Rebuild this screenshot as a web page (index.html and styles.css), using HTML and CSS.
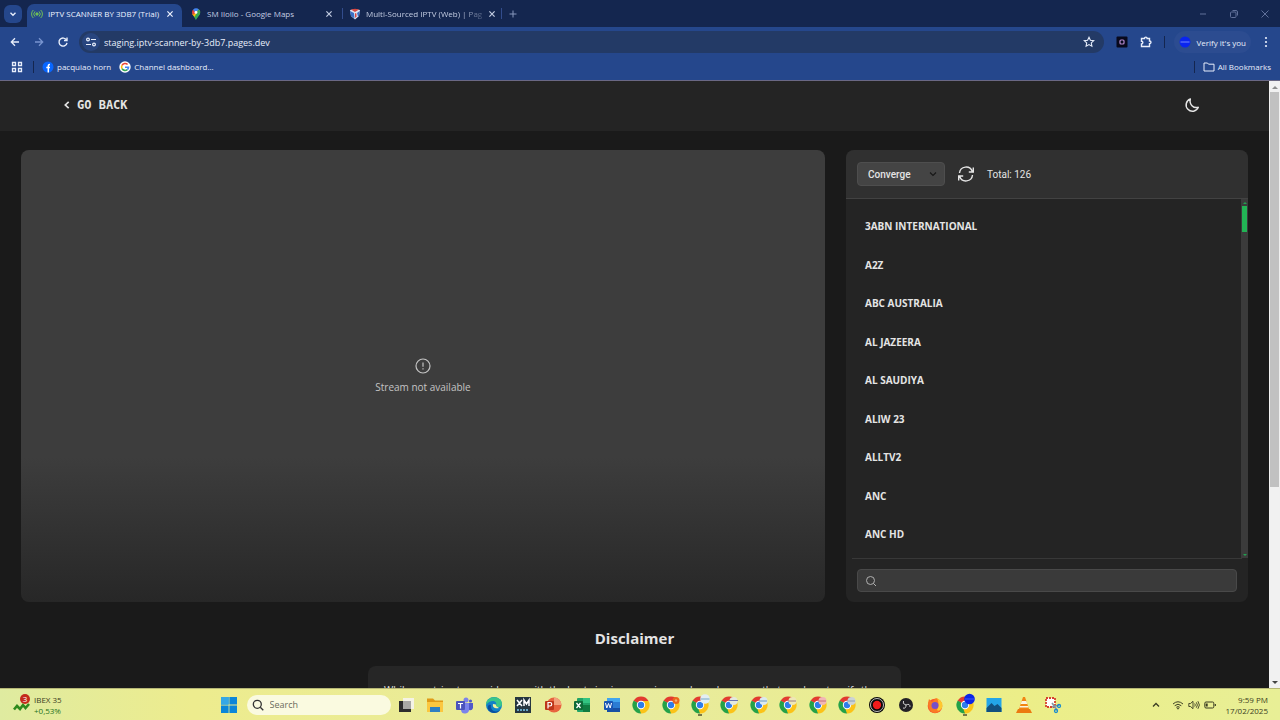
FILE: index.html
```html
<!DOCTYPE html>
<html lang="en">
<head>
<meta charset="utf-8">
<title>IPTV SCANNER BY 3DB7 (Trial)</title>
<link rel="stylesheet" href="styles.css">
</head>
<body>
<svg class="defs" aria-hidden="true">
  <symbol id="close" viewBox="0 0 10 10"><path d="M2.4 2.4l5.2 5.2M7.6 2.4L2.4 7.6" fill="none" stroke="currentColor" stroke-width="1.2"/></symbol>
  <symbol id="chrome" viewBox="0 0 18 18">
    <path d="M9 9L1.6 4.7A8.5 8.5 0 0 1 16.4 4.7z" fill="#e23b30"/>
    <path d="M9 9L16.4 4.7A8.5 8.5 0 0 1 9 17.5z" fill="#fbc318"/>
    <path d="M9 9L9 17.5A8.5 8.5 0 0 1 1.6 4.7z" fill="#24a148"/>
    <path d="M9 5H16.4L12.6 11z" fill="#fbc318"/><path d="M12.6 11L9 17.5L7 12z" fill="#fbc318"/>
    <path d="M1.6 4.7L5.4 11.2L9 13L5.6 7z" fill="#24a148"/>
    <circle cx="9" cy="9" r="4.2" fill="#fff"/><circle cx="9" cy="9" r="3.2" fill="#2f7de9"/>
  </symbol>
</svg>

<header class="browser">
  <div class="tabstrip">
    <button class="tab-search" aria-label="Search tabs"><svg viewBox="0 0 10 10" class="i10"><path d="M2.5 3.7L5 6.2l2.5-2.5" fill="none" stroke="currentColor" stroke-width="1.4"/></svg></button>
    <div class="tabs">
      <div class="tab tab-active">
        <svg viewBox="0 0 12 12" class="i12" fill="none" stroke="#6fbf58"><circle cx="6" cy="6" r="1.2" fill="#6fbf58"/><path d="M4 3.4a3.6 3.6 0 0 0 0 5.2M8 3.4a3.6 3.6 0 0 1 0 5.2M2.3 2a5.5 5.5 0 0 0 0 8M9.7 2a5.5 5.5 0 0 1 0 8"/></svg>
        <span class="tab-title">IPTV SCANNER BY 3DB7 (Trial)</span>
        <button class="tab-close" aria-label="Close tab"><svg class="i10"><use href="#close"/></svg></button>
      </div>
      <div class="tab">
        <svg viewBox="0 0 12 12" class="i12"><path d="M6 12C5.6 9.4 2 7.600 2 4.600L6 4.500z" fill="#34a853"/><path d="M6 12C6.400 9.400 10 7.600 10 4.400L6 4.500L4 8.500z" fill="#34a853"/><path d="M2.300 6.200L8.600 1.300A4 4 0 0 1 9.700 6L4.500 9z" fill="#fbbc04"/><path d="M2 4.500A4 4 0 0 1 3.200 1.600L6 4.500L2.800 7z" fill="#ea4335"/><path d="M3.100 1.700A4 4 0 0 1 9 1.600L5.600 5z" fill="#4285f4"/><path d="M8.600 1.300A4 4 0 0 1 9.400 6.700L6 11.500L4.500 8.900z" fill="#34a853"/><circle cx="6" cy="4.400" r="1.400" fill="#fff"/></svg>
        <span class="tab-title">SM Iloilo - Google Maps</span>
        <button class="tab-close" aria-label="Close tab"><svg class="i10"><use href="#close"/></svg></button>
      </div>
      <div class="tab">
        <svg viewBox="0 0 12 12" class="i12"><path d="M1 2L6 1L11 2L10 8L6 11.500L2 8z" fill="#dce4f2"/><path d="M1 3L5 5L5.500 10.500L2 8z" fill="#3a6fc4"/><path d="M2 1.500L6 .7L10 1.500L6 4z" fill="#d8453e"/><path d="M10.800 3L8 5L9 8.500L10 8z" fill="#3a6fc4"/><path d="M6 5l2 1-1 1 1 1-2 2z" fill="#d8453e"/></svg>
        <span class="tab-title tab-fade">Multi-Sourced IPTV (Web) | Pag</span>
        <button class="tab-close" aria-label="Close tab"><svg class="i10"><use href="#close"/></svg></button>
      </div>
      <button class="tab-new" aria-label="New tab"><svg viewBox="0 0 10 10" class="i10"><path d="M5 1.500v7M1.500 5h7" stroke="currentColor"/></svg></button>
    </div>
    <div class="window-controls">
      <button aria-label="Minimize"><svg viewBox="0 0 10 10" class="i10"><path d="M2 5h6" stroke="currentColor"/></svg></button>
      <button aria-label="Restore"><svg viewBox="0 0 10 10" class="i10" fill="none" stroke="currentColor"><rect x="1.500" y="3" width="5.500" height="5.500" rx="1"/><path d="M3.500 1.500H7A1.500 1.500 0 0 1 8.500 3v3.500"/></svg></button>
      <button aria-label="Close window"><svg viewBox="0 0 10 10" class="i10"><path d="M1.500 1.500l7 7M8.500 1.500l-7 7" stroke="currentColor"/></svg></button>
    </div>
  </div>

  <div class="toolbar">
    <button class="tool" aria-label="Back"><svg viewBox="0 0 12 12" class="i12" fill="none" stroke="currentColor" stroke-width="1.300"><path d="M10 6H2.500M6 2.300L2.300 6L6 9.700"/></svg></button>
    <button class="tool tool-dim" aria-label="Forward"><svg viewBox="0 0 12 12" class="i12" fill="none" stroke="currentColor" stroke-width="1.300"><path d="M2 6h7.500M6 2.300L9.700 6L6 9.700"/></svg></button>
    <button class="tool" aria-label="Reload"><svg viewBox="0 0 12 12" class="i12" fill="none" stroke="currentColor" stroke-width="1.400"><path d="M9.500 4A4 4 0 1 0 10 6.800"/><path d="M10 1.500V4.500H7" /></svg></button>
    <div class="omnibox">
      <button class="site-info" aria-label="Site information"><svg viewBox="0 0 12 12" class="i12" fill="none" stroke="currentColor" stroke-width="1.200"><circle cx="3" cy="3.500" r="1.400"/><path d="M6 3.500h5M1 8.500h5"/><circle cx="9" cy="8.500" r="1.400"/></svg></button>
      <input class="address" type="text" aria-label="Address" value="staging.iptv-scanner-by-3db7.pages.dev">
      <button class="star" aria-label="Bookmark this tab"><svg viewBox="0 0 12 12" class="i12" fill="none" stroke="currentColor" stroke-width="1.100"><path d="M6 1.300l1.400 3 3.300.4-2.400 2.200.6 3.300L6 8.600l-2.900 1.600.6-3.300L1.300 4.700l3.300-.4z"/></svg></button>
    </div>
    <button class="tool" aria-label="Extension"><svg viewBox="0 0 12 12" class="i12"><rect x=".5" y=".5" width="11" height="11" rx="1" fill="#08091c"/><rect x="4" y="4" width="4" height="4" rx="1" fill="none" stroke="#b58ad0" stroke-width="1.200"/></svg></button>
    <button class="tool" aria-label="Extensions"><svg viewBox="0 0 12 12" class="i12" fill="none" stroke="currentColor" stroke-width="1.400"><path d="M1.500 2.500H4.500C4.500.6 7.100.6 7.100 2.500H9.500V5C11.500 5 11.500 7.700 9.500 7.700V10.500H1.500V8C3.300 8 3.300 5.200 1.500 5.200z"/></svg></button>
    <span class="divider"></span>
    <button class="profile"><svg viewBox="0 0 12 12" class="i12"><circle cx="6" cy="6" r="5.500" fill="#0a25ef"/><path d="M1.500 6h9" stroke="#8fa5ff" stroke-width=".8"/></svg><span>Verify it's you</span></button>
    <button class="tool" aria-label="Menu"><svg viewBox="0 0 12 12" class="i12" fill="currentColor"><circle cx="6" cy="2" r="1.100"/><circle cx="6" cy="6" r="1.100"/><circle cx="6" cy="10" r="1.100"/></svg></button>
  </div>

  <nav class="bookmarks" aria-label="Bookmarks">
    <button class="apps" aria-label="Apps"><svg viewBox="0 0 12 12" class="i12" fill="none" stroke="currentColor" stroke-width="1.300"><path d="M1.500 1.500H4.500V4.500H1.500zM7.500 1.500H10.500V4.500H7.500zM1.500 7.500H4.500V10.500H1.500zM7.500 7.500H10.500V10.500H7.500z"/></svg></button>
    <span class="divider"></span>
    <a href="#" class="bookmark"><svg viewBox="0 0 12 12" class="i12"><circle cx="6" cy="6" r="5.500" fill="#0866ff"/><path d="M6.300 11.500V5Q6.300 3.400 8 3.500M4.300 6.600H8" fill="none" stroke="#fff" stroke-width="1.500"/></svg>pacquiao horn</a>
    <a href="#" class="bookmark"><svg viewBox="0 0 12 12" class="i12" fill="none" stroke-width="1.600"><circle cx="6" cy="6" r="5.700" fill="#fff"/><path d="M3 4.300A3.500 3.500 0 0 1 8.600 3.500" stroke="#ea4335"/><path d="M3 4.300A3.500 3.500 0 0 0 3 7.700" stroke="#fbbc04"/><path d="M3 7.700A3.500 3.500 0 0 0 8.300 8.600" stroke="#34a853"/><path d="M8.300 8.600A3.500 3.500 0 0 0 9.500 6.200H6" stroke="#4285f4"/></svg>Channel dashboard...</a>
    <span class="divider divider-end"></span>
    <a href="#" class="bookmark"><svg viewBox="0 0 12 12" class="i12" fill="none" stroke="currentColor"><path d="M1 2H4.500L5.500 3.200H11V10H1z"/></svg>All Bookmarks</a>
  </nav>
</header>

<div class="viewport">
  <div class="page">
    <div class="page-header">
      <a href="#" class="go-back"><svg viewBox="0 0 10 10" class="i10"><path d="M6.700 1.800L3.300 5l3.400 3.200" fill="none" stroke="currentColor" stroke-width="1.700"/></svg>GO BACK</a>
      <button class="theme" aria-label="Toggle theme"><svg viewBox="0 0 24 24" class="i16" fill="none" stroke="currentColor" stroke-width="2.200" stroke-linejoin="round"><path d="M9.500 3A9.500 9.500 0 1 0 21.500 15.500C14 17.500 7.500 11 9.500 3z"/></svg></button>
    </div>
    <main class="content">
      <section class="player">
        <svg viewBox="0 0 16 16" class="i16" fill="none" stroke="currentColor" stroke-width="1.200"><circle cx="8" cy="8" r="7"/><path d="M8 4.500v4.300M8 10.200v1.200"/></svg>
        <p>Stream not available</p>
      </section>
      <aside class="channels">
        <div class="channels-bar">
          <div class="source">
            <select aria-label="Source"><option>Converge</option></select>
            <svg viewBox="0 0 10 10" class="i10 source-arrow"><path d="M2 3.500l3 3 3-3" fill="none" stroke="#171717" stroke-width="1.100"/></svg>
          </div>
          <button class="refresh" aria-label="Refresh"><svg viewBox="0 0 18 18" class="i18" fill="none" stroke="currentColor" stroke-width="1.400"><path d="M2.500 8A6.600 6.600 0 0 1 15.300 6.500M16.300 2.500V7H11.800M15.500 10A6.600 6.600 0 0 1 2.700 11.500M1.700 15.500V11H6.200"/></svg></button>
          <span class="total">Total: 126</span>
        </div>
        <div class="list-wrap">
          <ul class="list">
            <li>3ABN INTERNATIONAL</li><li>A2Z</li><li>ABC AUSTRALIA</li><li>AL JAZEERA</li><li>AL SAUDIYA</li><li>ALIW 23</li><li>ALLTV2</li><li>ANC</li><li>ANC HD</li>
          </ul>
          <div class="list-scroll"><span class="mini up"></span><span class="list-thumb"></span><span class="mini down"></span></div>
        </div>
        <label class="search"><svg viewBox="0 0 12 12" class="i12" fill="none" stroke="currentColor"><circle cx="5.500" cy="5.500" r="4"/><path d="M8.500 8.500l2.500 2.500"/></svg><input type="text" aria-label="Search channels"></label>
      </aside>
    </main>
    <section class="disclaimer">
      <h2>Disclaimer</h2>
      <p>While we strive to provide you with the best viewing experience, please be aware that we do not verify the</p>
    </section>
  </div>
  <div class="scrollbar"><span class="arrow up"></span><span class="thumb"></span><span class="arrow down"></span></div>
</div>

<footer class="taskbar">
  <div class="widget">
    <svg viewBox="0 0 18 18" class="i18"><path d="M1 13.500l3-3.500 3 3 3-4 2.500 3L16 8" fill="none" stroke="#2d8a1c" stroke-width="2.600"/><circle cx="12" cy="3" r="5" fill="#c42b1c"/><text x="12" y="6" text-anchor="middle" class="badge">3</text></svg>
    <p>IBEX 35<br><span class="gain">+0,53%</span></p>
  </div>
  <div class="dock">
    <svg viewBox="0 0 16 16" class="i16"><path d="M0 0h7.600v7.600H0zM8.400 0H16v7.600H8.400zM0 8.400h7.600V16H0zM8.400 8.400H16V16H8.400z" fill="#0b86d8"/><path d="M0 0h7.600v7.600H0z" fill="#35a8e6"/></svg>
    <label class="dock-search"><svg viewBox="0 0 12 12" class="i12" fill="none" stroke="#333" stroke-width="1.300"><circle cx="5.300" cy="5.300" r="4"/><path d="M8.300 8.300l3 3"/></svg><input type="text" placeholder="Search" aria-label="Search"></label>
    <div class="apps-row">
      <svg viewBox="0 0 18 18" class="i18"><rect x="6" y="2" width="11" height="11" fill="#f5f3e6"/><rect x="2" y="5" width="12" height="11" fill="#2d2d2d"/><path d="M6 5h8v8H6z" fill="#a9a9a5"/></svg>
      <svg viewBox="0 0 18 18" class="i18"><path d="M1 2.500h6l2 2h8v3H1z" fill="#e09a17"/><path d="M1 6h16v10H1z" fill="#fbc740"/><path d="M4 11h10v5H4z" fill="#2e7fc2"/></svg>
      <svg viewBox="0 0 18 18" class="i18"><circle cx="11" cy="4" r="2.500" fill="#7b83eb"/><circle cx="15.500" cy="5" r="1.600" fill="#5059c9"/><path d="M12 7h6v5q-1 3-4 2z" fill="#5059c9"/><path d="M6 7h8v6a4 4 0 0 1-8 1z" fill="#7b83eb"/><rect x="1" y="5" width="9" height="9" rx="1" fill="#4b53bc"/><path d="M3 7.500h5M5.500 7.500v5" stroke="#fff" stroke-width="1.200"/></svg>
      <svg viewBox="0 0 18 18" class="i18"><circle cx="9" cy="9" r="8" fill="#1380c7"/><path d="M1 9C1-1 17-1 17 8c0 4-6 4-6 2C13 4 5 3 1 9z" fill="#39c58a"/><path d="M6 9c-1 6 5 8 9 5-2 4-10 4-12-1-1-3 1-5 3-4z" fill="#0b4f9e"/><path d="M8 8c-1 4 3 5 6 4l-3-2q1-2-3-2" fill="#eff0a0"/></svg>
      <svg viewBox="0 0 18 18" class="i18"><rect x="1" y="1" width="16" height="16" fill="#263640"/><path d="M3 4l5 6M8 4l-5 6M10 10V4l2.500 4L15 4v6" fill="none" stroke="#fff" stroke-width="1.500"/><path d="M3 14h12" stroke="#66a5c4" stroke-width="2" stroke-dasharray="2 1"/></svg>
      <svg viewBox="0 0 18 18" class="i18"><circle cx="10" cy="9" r="7.500" fill="#e8643f"/><path d="M10 1.500A7.500 7.500 0 0 1 17.500 9H10z" fill="#f2a17c"/><rect x="1" y="5" width="9" height="9" rx="1" fill="#bd3519"/><path d="M4 12.500v-6h2a1.500 1.500 0 0 1 0 3.500H4" fill="none" stroke="#fff" stroke-width="1.200"/></svg>
      <svg viewBox="0 0 18 18" class="i18"><rect x="4" y="2" width="13" height="14" rx="1" fill="#21a366"/><path d="M10 9h7v7h-7z" fill="#107c41"/><path d="M10 2h7v5h-7z" fill="#33c481"/><rect x="1" y="5" width="9" height="9" rx="1" fill="#0f6b38"/><path d="M3.500 7l4 5M7.500 7l-4 5" stroke="#fff" stroke-width="1.300"/></svg>
      <svg viewBox="0 0 18 18" class="i18"><rect x="4" y="2" width="13" height="14" rx="1" fill="#2b7cd3"/><path d="M4 2h13v4H4z" fill="#41a5ee"/><path d="M4 12h13v4H4z" fill="#1850a4"/><rect x="1" y="5" width="9" height="9" rx="1" fill="#1956b3"/><path d="M2.500 7l1.300 5 1.700-4.500L7.200 12l1.300-5" fill="none" stroke="#fff"/></svg>
      <svg viewBox="0 0 18 18" class="i18"><use href="#chrome"/></svg>
      <svg viewBox="0 0 18 18" class="i18"><use href="#chrome"/><circle cx="14" cy="4.500" r="3.500" fill="#eb671d"/><circle cx="14" cy="4.500" r="1.200" fill="#f5b26a"/></svg>
      <svg viewBox="0 0 18 18" class="i18 running"><use href="#chrome"/><circle cx="14" cy="3" r="4.800" fill="#e3eef2"/><path d="M9.500 3h9" stroke="#76a8c8"/></svg>
      <svg viewBox="0 0 18 18" class="i18"><use href="#chrome"/><circle cx="13.500" cy="5" r="4" fill="#e4e9df"/><path d="M9 4.500h9" stroke="#6c74ae"/></svg>
      <svg viewBox="0 0 18 18" class="i18"><use href="#chrome"/><circle cx="13.500" cy="5" r="4" fill="#dbeaf0"/><path d="M9 5h8" stroke="#6997bf"/></svg>
      <svg viewBox="0 0 18 18" class="i18"><use href="#chrome"/><circle cx="13.500" cy="5" r="4" fill="#eee7b7"/><path d="M9 5h8" stroke="#997e80"/></svg>
      <svg viewBox="0 0 18 18" class="i18"><use href="#chrome"/><circle cx="13.500" cy="5" r="4" fill="#f1b7b5"/><path d="M9 5h8" stroke="#c36e78"/></svg>
      <svg viewBox="0 0 18 18" class="i18"><use href="#chrome"/><circle cx="13.500" cy="5" r="4" fill="#cbd3d5"/><path d="M9 5h8" stroke="#8a9eb5"/></svg>
      <svg viewBox="0 0 18 18" class="i18"><circle cx="9" cy="9" r="8" fill="#090909"/><circle cx="9" cy="9" r="6.500" fill="none" stroke="#eee" stroke-width=".8"/><circle cx="9" cy="9" r="4.200" fill="#f01b1b"/></svg>
      <svg viewBox="0 0 18 18" class="i18"><circle cx="9" cy="9" r="7" fill="#222126"/><path d="M9 9Q5 8 6.500 5M9 9q4-2 4 2M9 9q0 4-3 3" fill="none" stroke="#cfcfcf"/></svg>
      <svg viewBox="0 0 18 18" class="i18"><circle cx="9" cy="10" r="7.300" fill="#f9572c"/><path d="M2 7L3 3l3 3 4-4q6 2 6 8-1 6-7 7-7-1-7-10" fill="#fa7a24"/><path d="M11 2q7 4 5 10-3 4-5 2 3-6 0-12" fill="#ffc72e"/><circle cx="9" cy="9.500" r="3.500" fill="#7650c8"/></svg>
      <svg viewBox="0 0 18 18" class="i18 running"><use href="#chrome"/><circle cx="13.500" cy="3" r="5.300" fill="#0a25e8"/><path d="M9 3h9" stroke="#5570ff" stroke-width=".7"/></svg>
      <svg viewBox="0 0 18 18" class="i18"><rect x="1.500" y="2" width="15" height="14" fill="#23a5e8"/><path d="M1.500 16v-4l5-5 3 3 3-2 4 4v4z" fill="#12507f"/></svg>
      <svg viewBox="0 0 18 18" class="i18"><path d="M8 1h2l4 12H4z" fill="#f28512"/><path d="M6.700 5h4.600l1 3H5.700zM5 10h8l.5 1.500h-9z" fill="#fbf5de"/><path d="M3 13h12l2 4H1z" fill="#ec7a10"/></svg>
      <svg viewBox="0 0 18 18" class="i18"><rect x="2" y="2" width="9" height="9" fill="#fff" stroke="#d5402f" stroke-width="1.800" stroke-dasharray="2 1"/><path d="M8 7l5 7M15 9l-7 2" stroke="#8397a5" stroke-width="1.600"/><circle cx="15" cy="10" r="1.500" fill="none" stroke="#168bd0" stroke-width="1.300"/><circle cx="12" cy="15" r="1.500" fill="none" stroke="#168bd0" stroke-width="1.300"/></svg>
    </div>
  </div>
  <div class="tray">
    <svg viewBox="0 0 12 12" class="i12"><path d="M3 7.500l3-3 3 3" fill="none" stroke="currentColor" stroke-width="1.300"/></svg>
    <div class="tray-icons">
      <svg viewBox="0 0 12 12" class="i12" fill="none" stroke="currentColor"><path d="M1 5q5-4.500 10 0M2.700 6.700q3.300-3 6.600 0M4.300 8.300q1.700-1.400 3.400 0"/><circle cx="6" cy="9.500" r=".6"/></svg>
      <svg viewBox="0 0 12 12" class="i12" fill="none" stroke="currentColor" stroke-width=".9"><path d="M.8 4.500H2.500L5 2.300v7.400L2.500 7.500H.8zM6.700 4.500q1.200 1.500 0 3M8.300 3.300q2.200 2.700 0 5.400M9.900 2.200q3 3.800 0 7.600"/></svg>
      <svg viewBox="0 0 12 12" class="i12" fill="none" stroke="currentColor"><rect x=".8" y="3" width="9" height="6" rx="1.200"/><path d="M11.300 5v2" stroke-width="1.200"/><path d="M2.700 4.500v3" stroke-width="2"/></svg>
    </div>
    <p class="clock">9:59 PM<br>17/02/2025</p>
  </div>
</footer>
</body>
</html>
```
FILE: styles.css
```css
* { box-sizing: border-box; }
body {
  margin: 0; height: 100vh; display: flex; flex-direction: column; overflow: hidden;
  font-family: "Open Sans", "Noto Sans", sans-serif; font-size: 8px; background: #1a1a1a; color: #e4e4e4;
}
button { border: 0; padding: 0; margin: 0; background: none; color: inherit; font: inherit; display: flex; align-items: center; justify-content: center; }
input, select { font: inherit; color: inherit; border: 0; padding: 0; margin: 0; background: none; outline: 0; min-width: 0; }
a { color: inherit; text-decoration: none; }
p, h2, ul { margin: 0; padding: 0; }
svg { flex: none; display: block; overflow: visible; }
.defs { position: absolute; width: 0; height: 0; }
.i10 { width: 10px; height: 10px; }
.i12 { width: 12px; height: 12px; }
.i16 { width: 16px; height: 16px; }
.i18 { width: 18px; height: 18px; }

.browser { background: #25478c; color: #e8eefb; border-bottom: 1px solid #6a6884; flex: none; font-weight: 500; }
.tabstrip { display: flex; align-items: center; height: 27px; background: #14264f; padding: 0 8px 0 4px; }
.tab-search { width: 18px; height: 18px; border-radius: 6px; background: #25478c; margin-right: 5px; }
.tabs { display: flex; align-items: flex-end; gap: 4px; height: 100%; flex: 1; }
.tab { display: flex; align-items: center; gap: 5px; width: 155px; height: 23px; padding: 0 7px 4px 4px; color: #c3cce2; position: relative; }
.tab + .tab + .tab::before, .tab-new::before { content: ""; position: absolute; left: -3px; top: 4px; width: 1px; height: 11px; background: #324c8c; }
.tab-active { background: #25478c; border-radius: 7px 7px 0 0; color: #eef3ff; }
.tab-title { flex: 1; white-space: nowrap; }
.tab-fade { mask-image: linear-gradient(90deg, #000 80%, rgba(0, 0, 0, 0.3)); }
.tab-new { position: relative; height: 23px; width: 18px; padding-bottom: 4px; color: #8797bd; }
.window-controls { display: flex; gap: 21px; color: #60709a; padding-right: 2px; }
.toolbar { display: flex; align-items: center; height: 30px; gap: 12px; padding: 0 8px 0 9px; }
.tool { width: 12px; height: 18px; }
.tool-dim { color: #7894cf; }
.omnibox { display: flex; align-items: center; flex: 1; height: 22px; border-radius: 11px; background: #233a66; padding: 0 9px 0 3px; gap: 4px; margin-left: -2px; }
.site-info { width: 18px; height: 18px; border-radius: 50%; background: #28457f; }
.address { flex: 1; font-size: 9px; }
.divider { width: 1px; height: 12px; background: #14264f; }
.divider-end { margin-left: auto; }
.profile { height: 22px; border-radius: 11px; background: #2c4c90; padding: 0 5px; margin: 0 -3px; gap: 5px; white-space: nowrap; }
.bookmarks { display: flex; align-items: center; height: 23px; padding: 0 9px 4px 11px; gap: 8px; }
.apps { margin-right: 2px; }
.bookmark { display: flex; align-items: center; gap: 3px; white-space: nowrap; }

.viewport { flex: 1; min-height: 0; display: flex; overflow: hidden; }
.page { flex: 1; min-width: 0; overflow: hidden; }
.page-header { display: flex; align-items: center; justify-content: space-between; height: 50px; padding: 0 69px 2px 62px; background: #242424; }
.go-back { display: flex; align-items: center; gap: 5px; font: bold 12px "DejaVu Sans Mono", monospace; }
.content { display: grid; grid-template-columns: 2fr 1fr; gap: 21px; padding: 19px 21px 0; }
.player { aspect-ratio: 16 / 9; display: flex; flex-direction: column; align-items: center; justify-content: center; gap: 5px; border-radius: 8px; background: linear-gradient(#3d3d3d 68%, #272727); color: #c4c4c4; font-size: 10px; line-height: 16px; }
.channels { display: flex; flex-direction: column; min-height: 0; border-radius: 8px; background: #242424; overflow: hidden; }
.channels-bar { display: flex; align-items: center; gap: 12px; height: 49px; padding: 0 11px; background: #303030; border-bottom: 1px solid #424242; font: 500 10px Roboto, "Liberation Sans", sans-serif; }
.total { font-weight: 400; }
.source { position: relative; }
.source select { appearance: none; width: 88px; height: 24px; padding: 0 10px; border: 1px solid #4e4e4e; border-radius: 4px; background: #444; }
.source-arrow { position: absolute; right: 7px; top: 7px; pointer-events: none; }
.list-wrap { flex: 1; display: flex; min-height: 0; }
.list { flex: 1; display: flex; flex-direction: column; list-style: none; padding: 8px 19px 5px; font-size: 10px; font-weight: 700; }
.list li { flex: 1; display: flex; align-items: center; }
.list-scroll { width: 7px; background: #3b3b3b; display: flex; flex-direction: column; align-items: center; padding: 3px 0 2px; gap: 2px; }
.list-thumb { width: 5px; height: 26px; background: #22b455; }
.mini { border: 2px solid transparent; }
.mini.up { border-top: 0; border-bottom-color: #22a050; }
.mini.down { border-bottom: 0; border-top-color: #22a050; margin-top: auto; }
.search { display: flex; align-items: center; gap: 6px; height: 23px; margin: 11px 11px 10px; padding: 0 7px; background: #3a3a3a; border: 1px solid #494949; border-radius: 4px; color: #b0b0b0; position: relative; }
.search::before { content: ""; position: absolute; left: -6px; right: -6px; top: -12px; height: 1px; background: #383838; }
.search input { flex: 1; }
.disclaimer { text-align: center; }
.disclaimer h2 { font-size: 15px; line-height: 24px; margin: 24px 0 16px; }
.disclaimer p { width: 42%; margin: 0 auto; padding: 16px; border-radius: 8px; background: #262626; font-size: 10px; line-height: 16px; text-align: left; white-space: nowrap; }
.scrollbar { width: 11px; background: #f1f1f1; display: flex; flex-direction: column; align-items: center; padding: 5px 0 4px; }
.thumb { width: 9px; flex: 0 0 66%; margin-top: 3px; background: #c1c1c1; }
.arrow { border: 3px solid transparent; }
.arrow.up { border-top: 0; border-bottom-color: #8d8d8d; }
.arrow.down { border-bottom: 0; border-top-color: #444; margin-top: auto; }

.taskbar { flex: none; display: grid; grid-template-columns: 1fr 66% 1fr; align-items: center; height: 32px; background: linear-gradient(90deg, #dfeba0, #edec8e 15%, #e8eb9d 50%, #ecee88 80%, #e8ef96); color: #3b3d23; border-top: 1px solid #b6b777; font-size: 8px; line-height: 11px; }
.widget { display: flex; align-items: center; gap: 3px; padding-left: 13px; white-space: nowrap; }
.gain { color: #277220; }
.badge { font-size: 8px; fill: #fff; }
.dock { display: flex; align-items: center; gap: 10px; padding: 0 0 0 3px; }
.dock-search { display: flex; align-items: center; gap: 6px; width: 144px; height: 20px; border-radius: 10px; padding: 0 5px; background: #fafae0; font-size: 9px; }
.dock-search input { flex: 1; }
.dock-search input::placeholder { color: #6b6b5c; opacity: 1; }
.apps-row { flex: 1; display: flex; justify-content: space-between; margin-left: -4px; }
.running { box-shadow: 0 9px 0 -7px #777748; }
.tray { display: flex; align-items: center; justify-content: flex-end; gap: 10px; padding-right: 12px; white-space: nowrap; }
.tray-icons { display: flex; gap: 4px; }
.clock { text-align: right; }
```
